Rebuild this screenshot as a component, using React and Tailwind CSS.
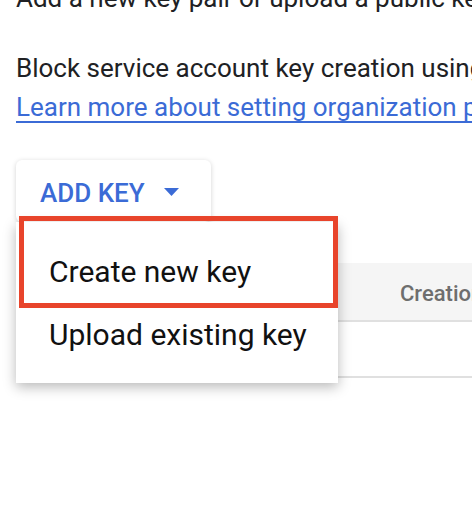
import { useState } from 'react';

const menuItems = ['Create new key', 'Upload existing key'];

export default function App() {
    const [open] = useState(true);

    return (
        <div className="relative h-[510px] w-[472px] overflow-hidden bg-white font-['Roboto',sans-serif] text-[#202124]">
            <div className="whitespace-nowrap pl-4 text-[26px] leading-[39px]">
                <p className="-mt-[21px]">Add a new key pair or upload a public key certificate from an existing key pair.</p>
                <p className="mt-[31px]">Block service account key creation using organization policies.</p>
                <a className="block text-[#3b6bd6] underline decoration-2 underline-offset-[5px]">
                    Learn more about setting organization policies for service accounts
                </a>
            </div>

            {/* Add key button, raised while its menu is open */}
            <div className="ml-4 mt-[33px] flex h-[62px] w-[195px] items-start rounded-md bg-white pl-6 pt-[17px] shadow-[0_1px_5px_rgba(0,0,0,0.18)]">
                <span className="text-[26px] font-medium leading-[32px] text-[#3b6bd6]">ADD KEY</span>
                <svg className="ml-[19px] mt-[11px]" width="15" height="8" viewBox="0 0 15 8">
                    <polygon points="0,0 15,0 7.5,8" fill="#3b6bd6" />
                </svg>
            </div>

            {/* Keys table */}
            <div className="ml-4 mt-[41px] whitespace-nowrap">
                <div className="flex h-[59px] border-b-2 border-[#e0e0e0] bg-[#f5f5f5]">
                    <div className="w-[384px] shrink-0" />
                    <div className="pt-[18px] text-[22px] font-medium leading-[26px] text-[#6e6e6e]">Creation date</div>
                </div>
                <div className="h-[56px] border-b-2 border-[#e0e0e0]" />
            </div>

            {open && (
                <div className="absolute left-4 top-[222px] w-[322px] bg-white pb-[17px] pt-[18px] shadow-[0_4px_12px_rgba(0,0,0,0.28)]">
                    {menuItems.map((item) => (
                        <div key={item} className="pl-[33px] text-[30px] leading-[63px] text-[#111]">
                            {item}
                        </div>
                    ))}
                </div>
            )}

            {/* highlight annotation */}
            <div className="pointer-events-none absolute left-[19px] top-[216px] h-[92px] w-[319px] border-[5px] border-[#e8442b]" />
        </div>
    );
}
